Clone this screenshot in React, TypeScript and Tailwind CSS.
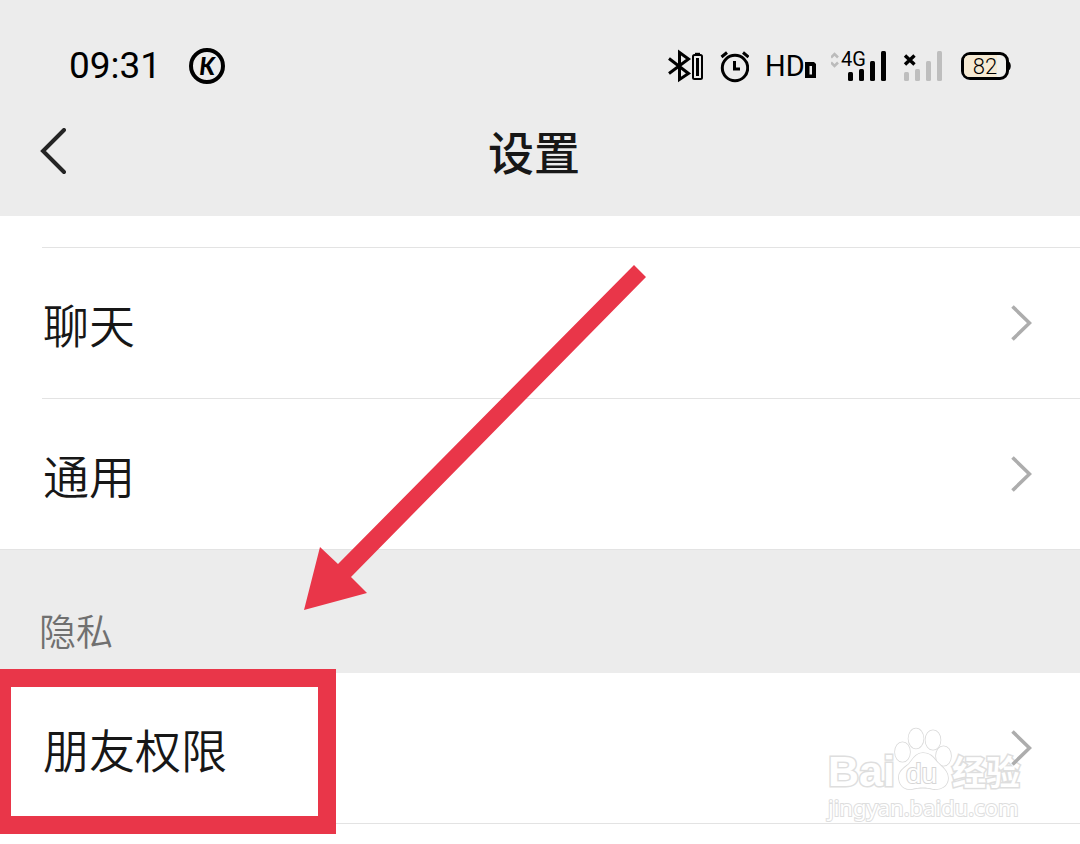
import React from "react";

function BadgeK() {
  return (
    <svg className="h-9 w-9" viewBox="0 0 36 36" aria-hidden="true">
      <circle cx="18" cy="18" r="16" fill="none" stroke="#000" strokeWidth="4" />
      <text x="18" y="26.500" textAnchor="middle" className="fill-black font-['Lato'] text-[24px] font-black italic">K</text>
    </svg>
  );
}

function BluetoothIcon() {
  return (
    <svg className="h-9 w-[35px]" viewBox="0 0 35 36" fill="none" stroke="#000" aria-hidden="true">
      <path d="M1 10.500 20.500 25.500 11.500 31.500V4.500L20.500 11 1 25.500" strokeWidth="3" />
      <rect x="25" y="7" width="9" height="24" rx="1.500" strokeWidth="2" />
      <path d="M27 5.800H32" strokeWidth="2" />
      <path d="M29.500 10V28" strokeWidth="3" />
    </svg>
  );
}

function AlarmIcon() {
  return (
    <svg className="h-9 w-[30px]" viewBox="0 0 30 36" fill="none" stroke="#000" aria-hidden="true">
      <circle cx="16" cy="20" r="12.700" strokeWidth="3" />
      <path d="M2.500 9 8 4.500M24 4.500 29.500 9" strokeWidth="3" />
      <path d="M15.500 13V21H21" strokeWidth="3" />
    </svg>
  );
}

function HdIcon() {
  return (
    <div className="flex h-9 w-[50px] items-center">
      <span className="font-['Roboto',sans-serif] text-[29px] leading-9 text-black">HD</span>
      <svg className="h-9 w-[11px] shrink-0" viewBox="0 0 11 36" aria-hidden="true">
        <path fillRule="evenodd" d="M0 14H9L11 16V30H0ZM4.500 18V26.500H7V18Z" />
      </svg>
    </div>
  );
}

function MobileSignal() {
  return (
    <svg className="h-9 w-[55px]" viewBox="0 0 55 36" aria-label="4G signal">
      <path d="M0 9.500 3.500 6 7 9.500M0 14.500 3.500 18 7 14.500" fill="none" stroke="#bbb" strokeWidth="2.600" />
      <text x="10" y="18" className="fill-black font-['Roboto',sans-serif] text-[20px]">4G</text>
      <rect x="17" y="24" width="5" height="9" rx="1.500" />
      <rect x="28" y="21" width="5" height="12" rx="1.500" />
      <rect x="39" y="13" width="5" height="20" rx="1.500" />
      <rect x="50" y="3" width="5" height="30" rx="1.500" />
    </svg>
  );
}

function EmptySignal() {
  return (
    <svg className="h-9 w-[43px]" viewBox="0 0 43 36" fill="#bebebe" aria-label="No signal">
      <rect x="2" y="24" width="5" height="9" rx="1.500" />
      <rect x="13" y="21" width="5" height="12" rx="1.500" />
      <rect x="24" y="13" width="5" height="20" rx="1.500" />
      <rect x="35" y="3" width="5" height="30" rx="1.500" />
      <path d="M3 7.500 12.500 16.500M12.500 7.500 3 16.500" fill="none" stroke="#000" strokeWidth="3.400" />
    </svg>
  );
}

function Battery() {
  return (
    <svg className="h-9 w-[50px]" viewBox="0 0 50 36" aria-label="Battery 82%">
      <path d="M46 13C51 13 51 23 46 23Z" />
      <rect x="1.500" y="5.500" width="45" height="25" rx="7.500" fill="#f0f0ed" stroke="#000" strokeWidth="3" />
      <path d="M9 7H36V29H9Q3 29 3 23V13Q3 7 9 7Z" fill="#f6ead3" />
      <text x="24" y="25.500" textAnchor="middle" className="fill-black font-['Roboto',sans-serif] text-[22px] font-light">82</text>
    </svg>
  );
}

function StatusBar() {
  return (
    <div className="flex h-11 items-center justify-between pr-[69px] pl-[69px]">
      <div className="flex items-center gap-7">
        <time className="font-['Roboto',sans-serif] text-[37px] leading-11 text-black">09:31</time>
        <BadgeK />
      </div>
      <div className="flex items-center gap-4">
        <BluetoothIcon />
        <AlarmIcon />
        <HdIcon />
        <MobileSignal />
        <EmptySignal />
        <Battery />
      </div>
    </div>
  );
}

function Row({ label, last = false }: { label: string; last?: boolean }) {
  return (
    <li className="pl-[42px]">
      <button
        type="button"
        className={
          last
            ? "flex h-[150px] w-full items-center justify-between pr-12 text-left"
            : "flex h-[151px] w-full items-center justify-between border-b border-[#e3e3e3] pr-12 text-left"
        }
      >
        <span className="pl-px text-[46px] leading-16 font-[350] text-[#171717]">{label}</span>
        <svg className="relative z-10 h-9 w-[22px]" viewBox="0 0 22 36" fill="none" stroke="#adadad" strokeWidth="3.600" aria-hidden="true">
          <path d="M2.500 1.500 19.500 18 2.500 34.500" />
        </svg>
      </button>
    </li>
  );
}

function Arrow() {
  return (
    <svg className="pointer-events-none absolute top-[265px] left-[304px] h-[345px] w-[342px]" viewBox="0 0 342 345" aria-hidden="true">
      <path d="M330 0 342 12 47 312 63 328 0 345 16 282 34 299Z" fill="#e93649" />
    </svg>
  );
}

function Watermark() {
  return (
    <div className="pointer-events-none absolute top-[725px] left-[828px] w-[196px] text-white [-webkit-text-stroke:3px_#dedede] [paint-order:stroke_fill]">
      <div className="flex h-[68px] items-end">
        <span className="w-[66px] font-['Liberation_Sans',sans-serif] text-[43px] leading-11 font-bold">Bai</span>
        <div className="relative h-[68px] w-[58px]">
          <svg className="h-[68px] w-[58px]" viewBox="0 0 58 68" fill="#fff" stroke="#dadada" strokeWidth="1.600" aria-hidden="true">
            <ellipse cx="8.500" cy="27" rx="7.500" ry="9.800" />
            <ellipse cx="22" cy="13.500" rx="7.500" ry="10" />
            <ellipse cx="39" cy="15" rx="7.500" ry="9.800" />
            <ellipse cx="49.500" cy="31" rx="7.500" ry="9.800" />
            <path d="M29 28C22 28 19 34 15 39C9 44 4 47 5 54C6 62 12 65 18 64C26 62 32 62 39 64C47 65 54 61 54 53C54 46 48 42 43 37C39 32 36 28 29 28Z" />
          </svg>
          <span className="absolute top-[35px] left-3 font-['Liberation_Sans',sans-serif] text-[28px] leading-7 [-webkit-text-stroke:2px_#d6d6d6]">du</span>
        </div>
        <span className="text-[34px] leading-11 font-bold">经验</span>
      </div>
      <div className="pt-0.5 font-['Noto_Sans',sans-serif] text-[22px] leading-6 [-webkit-text-stroke:2px_#dedede]">jingyan.baidu.com</div>
    </div>
  );
}

export default function App() {
  return (
    <div className="relative min-h-screen overflow-hidden bg-white font-['Noto_Sans_CJK_SC',sans-serif]">
      <header className="bg-[#ececec] pt-11">
        <StatusBar />
        <nav className="grid h-32 grid-cols-[66px_1fr_78px] items-center">
          <button type="button" aria-label="返回" className="pl-10">
            <svg className="h-12 w-[26px]" viewBox="0 0 26 48" fill="none" stroke="#242424" strokeWidth="4" strokeLinecap="round" aria-hidden="true">
              <path d="M24 2 3 23 24 44" />
            </svg>
          </button>
          <h1 className="pb-1 text-center text-[46px] leading-16 font-medium text-[#171717]">设置</h1>
        </nav>
      </header>
      <main>
        <div className="pl-[42px]">
          <div className="h-8 border-b border-[#e3e3e3]" />
        </div>
        <ul>
          <Row label="聊天" />
          <Row label="通用" last />
        </ul>
        <h2 className="h-[124px] border-t border-[#e3e3e3] bg-[#ececec] pt-[52px] pl-[39px] text-[37px] leading-14 font-[350] text-[#707070]">隐私</h2>
        <ul>
          <Row label="朋友权限" />
        </ul>
      </main>
      <div className="pointer-events-none absolute top-[669px] left-0 h-[165px] w-[336px] border-18 border-l-11 border-[#e93649]" />
      <Arrow />
      <Watermark />
    </div>
  );
}
